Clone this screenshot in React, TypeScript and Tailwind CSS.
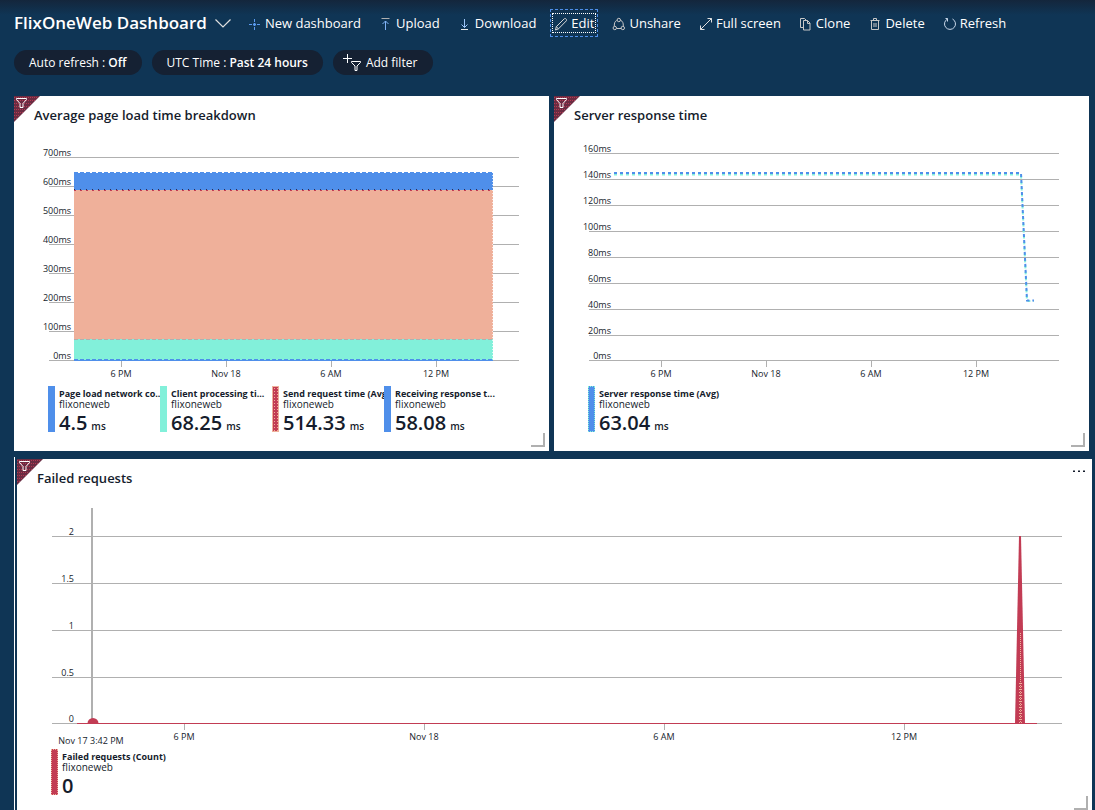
import React from "react";

const INK = "#151c2c";
const GRID = "#b0b0b0";

type Point = { at: number; label: string };

function Icon({ name }: { name: string }) {
  const shapes: Record<string, React.ReactNode> = {
    add: (
      <g stroke="#5b9bf0">
        <path d="M1 7.500h11" strokeDasharray="3 1" />
        <path d="M6.500 2v11" strokeDasharray="3 1" />
        <path d="M5.500 6.500h2v2h-2z" opacity=".5" />
      </g>
    ),
    upload: (
      <g>
        <path d="M2.500 1.500h8" stroke="#b0b0b0" />
        <path d="M6.500 4v9M3.500 7l3-3 3 3" stroke="#7fb2f5" />
      </g>
    ),
    download: (
      <g>
        <path d="M3 12.500h7" stroke="#e6e6e6" />
        <path d="M6.500 2v8.500M3.500 7.500l3 3 3-3" stroke="#9cc4f7" />
      </g>
    ),
    edit: <path d="M1.500 13l.8-3.300L10 2c.5-.5 1.300-.7 2-.1s.8 1.500.2 2.100L4.500 11.800zM2.300 9.700l2.200 2.100" stroke="#d8d8d8" />,
    share: (
      <g stroke="#c8c8c8">
        <path d="M4.700 3.500C3 4.200 2.200 6 2.300 9M8.900 3.500c1.700.7 2.500 2.500 2.400 5.500M5 11.500h4" />
        <circle cx="6.800" cy="3" r="1.700" />
        <circle cx="2.800" cy="11" r="1.700" />
        <circle cx="10.800" cy="11" r="1.700" />
      </g>
    ),
    full: <path d="M1.500 12.500l11-11M8.500 1.500h4v4M1.500 8.500v4h4" stroke="#e0e0e0" />,
    clone: (
      <g stroke="#c8c8c8">
        <path d="M4 10.500H1.500v-9h4l1.500 1.500" />
        <path d="M4.500 3.500h4l2.500 2.500v7h-6.500zM8.500 3.500v3h2.500" />
      </g>
    ),
    remove: (
      <g stroke="#c8c8c8">
        <path d="M3.500 3.500h7v9h-7zM2.500 3.500h9M5.500 3.500v-2h3v2M6 6v4M8 6v4" />
      </g>
    ),
    refresh: <path d="M2.500 1.500h2v3M9.500 2a5.500 5.500 0 1 1-5 0" stroke="#c9d8ea" />,
  };
  return (
    <svg viewBox="0 0 14 14" className="size-3.5 shrink-0" fill="none" aria-hidden="true">
      {shapes[name]}
    </svg>
  );
}

function Command({ icon, label, focused = false }: { icon: string; label: string; focused?: boolean }) {
  return (
    <button
      type="button"
      className={
        focused
          ? "relative flex h-5 items-center gap-[3px] whitespace-nowrap pt-0.5 text-[13px] outline-1 outline-dashed outline-offset-[3px] outline-[#4f8fea] before:absolute before:-inset-x-0.5 before:inset-y-0 before:border before:border-dotted before:border-white"
          : "flex h-5 items-center gap-[3px] whitespace-nowrap pt-0.5 text-[13px]"
      }
    >
      <Icon name={icon} />
      {label}
    </button>
  );
}

function FilterCorner() {
  return (
    <svg viewBox="0 0 26 26" className="absolute left-0 top-0 size-[26px]" fill="none" aria-hidden="true">
      <path d="M0 0h26L0 26z" fill="#6b2c42" />
      <path d="M0 1.500h24M0 4.500h21M0 7.500h18M0 10.500h15M0 13.500h12M0 16.500h9M0 19.500h6M0 22.500h3" stroke="#b43a52" strokeDasharray="1 1" />
      <path d="M2.500 2.500h10v1l-3.500 4v4h-3v-4l-3.500-4z" stroke="#fff" />
    </svg>
  );
}

function Frame({
  width,
  right,
  rows,
  ticks,
  label,
  children,
}: {
  width: number;
  right: number;
  rows: Point[];
  ticks: Point[];
  label: string;
  children: React.ReactNode;
}) {
  return (
    <svg viewBox={`0 0 ${width} 256`} className="block h-auto w-full text-[9px]" role="img" aria-label={label}>
      {rows.map((r) => (
        <g key={r.label}>
          <rect x="35" y={r.at} width={right - 35} height="1" fill={GRID} />
          <text x="57" y={r.at - 1} textAnchor="end" fill={INK}>
            {r.label}
          </text>
        </g>
      ))}
      {ticks.map((t) => (
        <g key={t.label}>
          <rect x={t.at} y="231" width="1" height="6" fill={GRID} />
          <text x={t.at} y="247" textAnchor="middle" fill={INK}>
            {t.label}
          </text>
        </g>
      ))}
      {children}
    </svg>
  );
}

function Legend({ title, value, unit, bar }: { title: string; value: string; unit?: string; bar: string }) {
  return (
    <li className="flex h-[46px] w-28 gap-1">
      <span className={`relative z-10 h-[46px] w-[7px] shrink-0 ${bar}`} />
      <div className="min-w-0 whitespace-nowrap text-[10px] leading-[11px]">
        <p className="mt-0.5 text-[9px] font-bold">{title}</p>
        <p>flixoneweb</p>
        <p className="flex items-baseline gap-1 font-semibold leading-[26px]">
          <span className="text-[20px]">{value}</span>
          {unit && <span>{unit}</span>}
        </p>
      </div>
    </li>
  );
}

function Tile({
  title,
  handle,
  chart,
  legend,
  menu,
}: {
  title: string;
  handle: string;
  chart: React.ReactNode;
  legend: React.ReactNode;
  menu?: boolean;
}) {
  return (
    <section className="relative min-w-0 flex-1 bg-white text-[#151c2c]">
      <FilterCorner />
      <div className="flex h-[34px] justify-between pl-5 pr-1.5 pt-[9px]">
        <h2 className="text-[13px] font-semibold leading-5">{title}</h2>
        {menu && (
          <button type="button" aria-label="More options" className="h-2 w-3.5">
            <svg viewBox="0 0 14 8" className="block h-2 w-3.5" fill={INK}>
              <path d="M1 2.500h2v1.500H1zM6 2.500h2v1.500H6zM11 2.500h2v1.500h-2z" />
            </svg>
          </button>
        )}
      </div>
      {chart}
      <ul className={menu ? "flex pl-[34px]" : "flex pb-[19px] pl-[34px]"}>{legend}</ul>
      <span className={`absolute right-1 size-3.5 border-b-2 border-r-2 border-[#b0b0b0] ${handle}`} />
    </section>
  );
}

const loadRows = [700, 600, 500, 400, 300, 200, 100, 0].map((v, i) => ({ at: 27 + i * 29, label: `${v}ms` }));
const serverRows = [160, 140, 120, 100, 80, 60, 40, 20, 0].map((v, i) => ({
  at: v === 0 ? 230 : 23 + i * 26,
  label: `${v}ms`,
}));
const failRows = [
  { at: 43, label: "2" },
  { at: 90, label: "1.5" },
  { at: 137, label: "1" },
  { at: 184, label: "0.5" },
  { at: 230, label: "0" },
];
const hours = ["6 PM", "Nov 18", "6 AM", "12 PM"];
const narrowTicks = hours.map((label, i) => ({ at: 107 + i * 105, label }));
const wideTicks = hours.map((label, i) => ({ at: 167 + i * 240, label }));

export default function App() {
  return (
    <div className="flex min-h-screen flex-col bg-[#0f3555] bg-[linear-gradient(to_bottom,#14263c,#0f3555_15px)] font-['Open_Sans','Noto_Sans',sans-serif] text-white">
      <header className="flex h-[46px] items-center pl-3.5">
        <h1 className="whitespace-nowrap text-[17px] font-semibold leading-6">FlixOneWeb Dashboard</h1>
        <button type="button" aria-label="Switch dashboard" className="ml-2 mr-[17px]">
          <svg viewBox="0 0 16 10" className="block h-2.5 w-4" fill="none" stroke="#e0e0e0" strokeWidth="1.200">
            <path d="M.5 1.500L8 9l7.500-7.500" />
          </svg>
        </button>
        <nav className="flex items-center gap-[18px]" aria-label="Dashboard commands">
          <Command icon="add" label="New dashboard" />
          <Command icon="upload" label="Upload" />
          <Command icon="download" label="Download" />
          <Command icon="edit" label="Edit" focused />
          <Command icon="share" label="Unshare" />
          <Command icon="full" label="Full screen" />
          <Command icon="clone" label="Clone" />
          <Command icon="remove" label="Delete" />
          <Command icon="refresh" label="Refresh" />
        </nav>
      </header>

      <div className="mb-[21px] mt-1 flex gap-2.5 pl-3.5 text-[12px]">
        <button type="button" className="h-[25px] whitespace-nowrap rounded-full bg-[#152133] px-[15px]">
          Auto refresh : <b className="font-semibold">Off</b>
        </button>
        <button type="button" className="h-[25px] whitespace-nowrap rounded-full bg-[#152133] px-[15px]">
          UTC Time : <b className="font-semibold">Past 24 hours</b>
        </button>
        <button type="button" className="flex h-[25px] items-center gap-1 whitespace-nowrap rounded-full bg-[#152133] pl-2.5 pr-4">
          <svg viewBox="0 0 19 18" className="h-[18px] w-[19px]" fill="none" stroke="#fff" aria-hidden="true">
            <path d="M0 4.500h9M4.500 0v9" />
            <path d="M8.500 7.500h9v1l-3.500 3.500v4.500h-2V12L8.500 8.500z" />
          </svg>
          Add filter
        </button>
      </div>

      <main className="flex flex-1 flex-col gap-1.5 pl-3.5 pr-[3px]">
        <div className="flex gap-[5px] pr-[3px]">
          <Tile
            title="Average page load time breakdown"
            handle="bottom-1"
            chart={
              <Frame width={535} right={505} rows={loadRows} ticks={narrowTicks} label="Average page load time breakdown">
                <rect x="60" y="42" width="419" height="18" fill="#4f8fea" />
                <rect x="60" y="60" width="419" height="149" fill="#efb09a" />
                <rect x="60" y="209" width="419" height="20" fill="#82f0da" />
                <rect x="60" y="229" width="419" height="2" fill="#4f8fea" />
                <path d="M64 42.500h415" stroke="#fff" strokeDasharray="2 4" />
                <path d="M60 59.500h419" stroke="#2b2d55" strokeDasharray="1 5" />
                <path d="M60 60.500h419" stroke="#c23c54" strokeDasharray="2 4" />
                <path d="M60 209.500h419" stroke="#b0b0b0" strokeDasharray="4 2" />
                <path d="M64 229.500h415" stroke="#82f0da" strokeDasharray="2 4" />
                <path d="M478.500 42v188" stroke="#fff" strokeDasharray="1 2" opacity=".7" />
              </Frame>
            }
            legend={
              <>
                <Legend title="Page load network co..." value="4.5" unit="ms" bar="bg-[#4f8fea]" />
                <Legend title="Client processing ti..." value="68.25" unit="ms" bar="bg-[#82f0da]" />
                <Legend
                  title="Send request time (Avg)"
                  value="514.33"
                  unit="ms"
                  bar="border border-[#efb09a] bg-[#c23c54] bg-[radial-gradient(circle,#efb09a_0.5px,transparent_0.8px)] bg-size-[3px_3px]"
                />
                <Legend title="Receiving response t..." value="58.08" unit="ms" bar="bg-[#4f8fea]" />
              </>
            }
          />
          <Tile
            title="Server response time"
            handle="bottom-1"
            chart={
              <Frame width={535} right={505} rows={serverRows} ticks={narrowTicks} label="Server response time">
                <g fill="none" strokeDasharray="3 3">
                  <path d="M60 44.500H467L473 171H480" stroke="#82f0da" strokeWidth="2" />
                  <path d="M60 43H467L473 170.500H480" stroke="#4f8fea" strokeWidth="2" />
                </g>
              </Frame>
            }
            legend={
              <Legend
                title="Server response time (Avg)"
                value="63.04"
                unit="ms"
                bar="border border-dotted border-[#82f0da] bg-[#4f8fea]"
              />
            }
          />
        </div>

        <div className="flex flex-1 border-l border-white pl-0.5 pt-0.5">
          <Tile
            title="Failed requests"
            handle="bottom-0"
            menu
            chart={
              <Frame width={1075} right={1045} rows={failRows} ticks={wideTicks} label="Failed requests">
                <rect x="74" y="15" width="2" height="211" fill={GRID} />
                <rect x="60" y="230" width="960" height="1" fill="#c23c54" />
                <path d="M70.500 230.500a5.500 5.500 0 0 1 11 0z" fill="#c23c54" />
                <path d="M1002 43h2l4 188h-10z" fill="#c23c54" />
                <path d="M1003.500 140v90" stroke="#efb09a" strokeDasharray="1 1" />
                <path d="M1002.500 190v40M1004.500 190v40" stroke="#efb09a" strokeDasharray="1 2" />
                <text x="74" y="251" textAnchor="middle" fill={INK}>
                  Nov 17 3:42 PM
                </text>
              </Frame>
            }
            legend={
              <Legend title="Failed requests (Count)" value="0" bar="border border-dotted border-[#efb09a] bg-[#c23c54]" />
            }
          />
        </div>
      </main>
    </div>
  );
}
